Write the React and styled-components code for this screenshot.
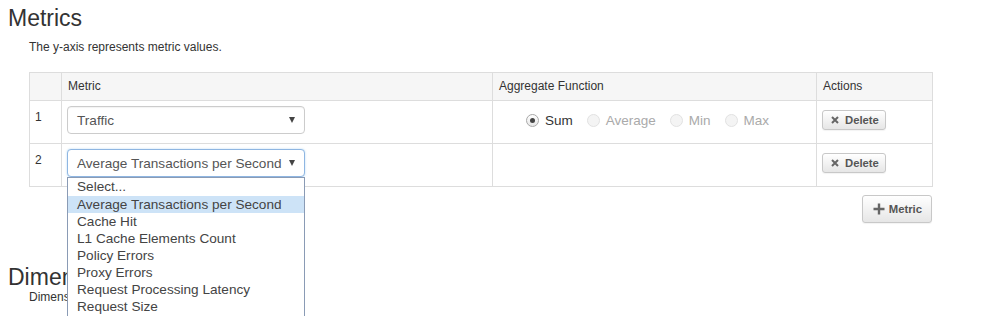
import React from "react";
import styled, { createGlobalStyle } from "styled-components";

const GlobalStyle = createGlobalStyle`
  html, body { margin: 0; padding: 0; background: #fff; }
  body {
    font-family: "Liberation Sans", Arial, sans-serif;
    color: #333;
    font-size: 12px;
    line-height: 1.42857;
    overflow: hidden;
  }
`;

const Page = styled.div`
  width: 998px;
  height: 316px;
  overflow: hidden;
  padding: 0 8px;
  box-sizing: border-box;
`;

const Heading = styled.h3`
  margin: ${p => p.$top}px 0 0;
  font-size: 23px;
  font-weight: 400;
  line-height: 1.1;
  color: #333;
`;

const Body = styled.div`
  width: 903px;
  margin-left: 21px;
`;

const Note = styled.p`
  margin: ${p => p.$top}px 0 0;
  font-size: 12px;
  color: #333;
`;

const Table = styled.table`
  width: 903px;
  margin-top: 16px;
  border-collapse: collapse;
  table-layout: fixed;
  border: 1px solid #ddd;
`;

const Th = styled.th`
  background: #f6f6f6;
  border: 1px solid #ddd;
  padding: 5px 6px;
  font-weight: 400;
  text-align: left;
  font-size: 12px;
  line-height: 17px;
  color: #333;
`;

const NumCell = styled.td`
  border: 1px solid #ddd;
  padding: 8px 5px;
  vertical-align: top;
  font-size: 12px;
  line-height: 17px;
  color: #333;
`;

const Td = styled.td`
  border: 1px solid #ddd;
  padding: 5px 6px 9px 5px;
  vertical-align: ${p => (p.$middle ? "middle" : "top")};
  text-align: ${p => (p.$center ? "center" : "left")};
`;

const SelectWrap = styled.div`
  position: relative;
  width: 238px;
`;

const SelectBox = styled.div`
  height: 28px;
  box-sizing: border-box;
  border: 1px solid ${p => (p.$open ? "#8fb6e2" : "#ccc")};
  border-radius: 4px;
  background: #fff;
  padding: 0 9px;
  display: flex;
  align-items: center;
  justify-content: space-between;
  font-size: 13.6px;
  color: #555;
  box-shadow: ${p => (p.$open ? "0 0 2px rgba(102,175,233,0.5)" : "inset 0 1px 1px rgba(0,0,0,0.05)")};
`;

const Caret = styled.span`
  width: 0;
  height: 0;
  border-left: 3.5px solid transparent;
  border-right: 3.5px solid transparent;
  border-top: 6px solid #444;
`;

const OptionList = styled.ul`
  position: absolute;
  top: 100%;
  left: 0;
  width: 238px;
  box-sizing: border-box;
  margin: 0;
  padding: 0 0 40px;
  list-style: none;
  background: #fff;
  border: 1px solid #8a9bb5;
  z-index: 10;
`;

const Option = styled.li`
  height: 17.1px;
  line-height: 17px;
  padding-left: 9px;
  font-size: 13.6px;
  color: #444;
  background: ${p => (p.$active ? "#cde3f7" : "transparent")};
`;

const RadioGroup = styled.div`
  display: inline-flex;
  align-items: center;
  gap: 14px;
  margin-right: 13px;
`;

const RadioItem = styled.label`
  display: inline-flex;
  align-items: center;
  gap: 6px;
  font-size: 13.5px;
  color: ${p => (p.$disabled ? "#aaa" : "#333")};
`;

const Circle = styled.span`
  width: 13px;
  height: 13px;
  border-radius: 50%;
  box-sizing: border-box;
  border: 1px solid ${p => (p.$disabled ? "#e2e2e2" : "#a9a9a9")};
  background: ${p => (p.$disabled ? "#f4f4f4" : "linear-gradient(#fff, #e6e6e6)")};
  display: inline-flex;
  align-items: center;
  justify-content: center;
  &::after {
    content: "";
    width: 5px;
    height: 5px;
    border-radius: 50%;
    background: #444;
    display: ${p => (p.$checked ? "block" : "none")};
  }
`;

const Button = styled.button`
  display: inline-flex;
  align-items: center;
  gap: ${p => (p.$big ? "4px" : "6px")};
  height: ${p => (p.$big ? "28px" : "20px")};
  padding: ${p => (p.$big ? "0 9px 0 10px" : "0 6px 0 8px")};
  box-sizing: border-box;
  border: 1px solid #c8c8c8;
  border-radius: 3px;
  background: linear-gradient(#fff, #e6e6e6);
  box-shadow: inset 0 1px 0 rgba(255,255,255,0.2), 0 1px 1px rgba(0,0,0,0.05);
  font-family: "Liberation Sans", Arial, sans-serif;
  font-size: 11.3px;
  font-weight: 700;
  color: #555;
  cursor: pointer;
`;

const ButtonRow = styled.div`
  display: flex;
  justify-content: flex-end;
  margin-top: 8px;
`;

const XIcon = () => (
  <svg width="8" height="8" viewBox="0 0 8 8">
    <path d="M1 1 L7 7 M7 1 L1 7" stroke="#666" strokeWidth="2" strokeLinecap="butt" />
  </svg>
);

const PlusIcon = () => (
  <svg width="12" height="12" viewBox="0 0 12 12">
    <path d="M6 0.5 V11.5 M0.5 6 H11.5" stroke="#666" strokeWidth="2.4" />
  </svg>
);

const options = [
  "Select...",
  "Average Transactions per Second",
  "Cache Hit",
  "L1 Cache Elements Count",
  "Policy Errors",
  "Proxy Errors",
  "Request Processing Latency",
  "Request Size",
];

const aggregates = [
  { name: "Sum", checked: true },
  { name: "Average", disabled: true },
  { name: "Min", disabled: true },
  { name: "Max", disabled: true },
];

function MetricSelect({ value, open }) {
  return (
    <SelectWrap>
      <SelectBox $open={open}>
        <span>{value}</span>
        <Caret />
      </SelectBox>
      {open && (
        <OptionList>
          {options.map(o => (
            <Option key={o} $active={o === value}>{o}</Option>
          ))}
        </OptionList>
      )}
    </SelectWrap>
  );
}

export default function App() {
  return (
    <Page>
      <GlobalStyle />
      <Heading $top={6}>Metrics</Heading>
      <Body>
        <Note $top={8}>The y-axis represents metric values.</Note>
        <Table>
          <colgroup>
            <col style={{ width: 32 }} />
            <col style={{ width: 431 }} />
            <col style={{ width: 324 }} />
            <col style={{ width: 116 }} />
          </colgroup>
          <thead>
            <tr>
              <Th></Th>
              <Th>Metric</Th>
              <Th>Aggregate Function</Th>
              <Th>Actions</Th>
            </tr>
          </thead>
          <tbody>
            <tr>
              <NumCell>1</NumCell>
              <Td><MetricSelect value="Traffic" /></Td>
              <Td $middle $center>
                <RadioGroup>
                  {aggregates.map(a => (
                    <RadioItem key={a.name} $disabled={a.disabled}>
                      <Circle $checked={a.checked} $disabled={a.disabled} />
                      {a.name}
                    </RadioItem>
                  ))}
                </RadioGroup>
              </Td>
              <Td $middle><Button><XIcon />Delete</Button></Td>
            </tr>
            <tr>
              <NumCell>2</NumCell>
              <Td><MetricSelect value="Average Transactions per Second" open /></Td>
              <Td $middle></Td>
              <Td $middle><Button><XIcon />Delete</Button></Td>
            </tr>
          </tbody>
        </Table>
        <ButtonRow>
          <Button $big><PlusIcon />Metric</Button>
        </ButtonRow>
      </Body>
      <Heading $top={42}>Dimensions</Heading>
      <Body>
        <Note $top={-2}>Dimensions represent the x-axis of the chart.</Note>
      </Body>
    </Page>
  );
}
